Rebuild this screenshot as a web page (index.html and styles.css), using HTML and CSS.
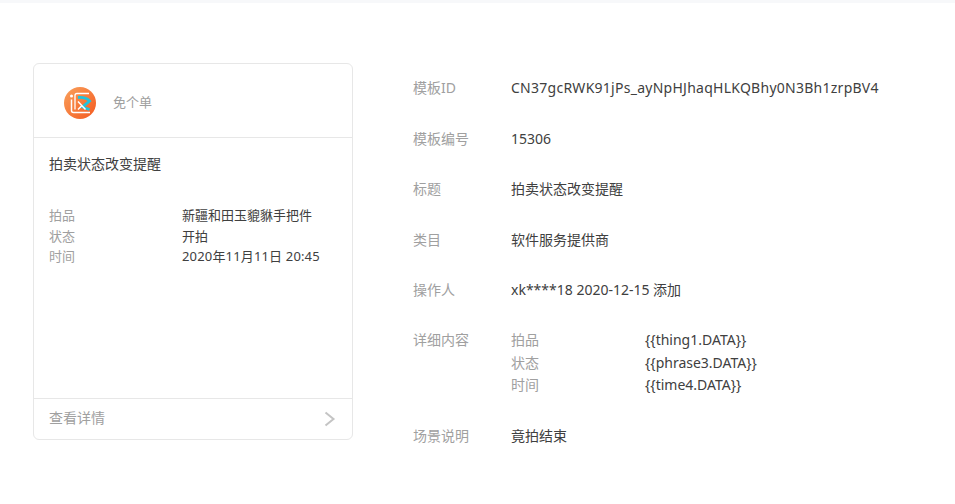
FILE: index.html
```html
<!DOCTYPE html>
<html lang="zh-CN">
<head>
<meta charset="utf-8">
<title>模板详情</title>
<link rel="stylesheet" href="styles.css">
</head>
<body>
<div class="topband"></div>
<main class="page">
  <section class="card">
    <header class="card-head">
      <svg class="logo" viewBox="0 0 32 32" width="32" height="32" aria-hidden="true">
        <defs>
          <linearGradient id="lg" x1="0" y1="0" x2="1" y2="1">
            <stop offset="0" stop-color="#f9a15c"/>
            <stop offset="1" stop-color="#f4591f"/>
          </linearGradient>
        </defs>
        <circle cx="16" cy="16" r="16" fill="url(#lg)"/>
        <circle cx="7.500" cy="9" r="1.500" fill="#fff"/>
        <path d="M7.500 12.500v11q0 2 2 2H26" fill="none" stroke="#fff" stroke-width="1.500"/>
        <path d="M25 6.500H13q-2 0-2 2v14" fill="none" stroke="#fff" stroke-width="1.300"/>
        <path d="M14 10.500q8-.500 11.500 3.500l-7 6 7 2.500" fill="none" stroke="#1fc4de" stroke-width="2.800"/>
        <path d="M14 14.500l7.500 8M14 22.500l4-4" fill="none" stroke="#fff" stroke-width="1.500"/>
      </svg>
      <span class="brand">免个单</span>
    </header>
    <div class="card-body">
      <h2 class="card-title">拍卖状态改变提醒</h2>
      <dl class="kv">
        <dt>拍品</dt><dd>新疆和田玉貔貅手把件</dd>
        <dt>状态</dt><dd>开拍</dd>
        <dt>时间</dt><dd class="time">2020年11月11日 20:45</dd>
      </dl>
    </div>
    <footer class="card-foot">
      <span>查看详情</span>
      <svg class="chev" viewBox="0 0 12 16" width="12" height="16" aria-hidden="true"><path d="M1.500 1.500l8 6.500-8 6.500" fill="none" stroke="#c4c4c4" stroke-width="2"/></svg>
    </footer>
  </section>
  <section class="info">
    <div class="row"><span class="label">模板ID</span><span class="value value-id">CN37gcRWK91jPs_ayNpHJhaqHLKQBhy0N3Bh1zrpBV4</span></div>
    <div class="row"><span class="label">模板编号</span><span class="value">15306</span></div>
    <div class="row"><span class="label">标题</span><span class="value">拍卖状态改变提醒</span></div>
    <div class="row"><span class="label">类目</span><span class="value">软件服务提供商</span></div>
    <div class="row"><span class="label">操作人</span><span class="value">xk****18 2020-12-15 添加</span></div>
    <div class="row row-detail"><span class="label">详细内容</span>
      <dl class="detail">
        <dt>拍品</dt><dd>{{thing1.DATA}}</dd>
        <dt>状态</dt><dd>{{phrase3.DATA}}</dd>
        <dt>时间</dt><dd>{{time4.DATA}}</dd>
      </dl>
    </div>
    <div class="row"><span class="label">场景说明</span><span class="value">竟拍结束</span></div>
  </section>
</main>
</body>
</html>
```
FILE: styles.css
```css
* { box-sizing: border-box; }
html, body { margin: 0; padding: 0; }
body {
  background: #fff;
  color: #404040;
  font-family: "Noto Sans", "Noto Sans CJK SC", sans-serif;
  font-size: 14px;
  line-height: 20px;
  height: 504px;
  overflow: hidden;
}
.topband { height: 3px; background: #f7f8fa; }
.page {
  display: flex;
  align-items: flex-start;
  gap: 60px;
  padding: 60px 0 0 33px;
}
.card {
  width: 320px;
  height: 377px;
  border: 1px solid #e7e7e7;
  border-radius: 6px;
  display: flex;
  flex-direction: column;
}
.card-head {
  height: 74px;
  flex: none;
  display: flex;
  align-items: center;
  padding: 4px 0 0 30px;
  border-bottom: 1px solid #e7e7e7;
}
.logo { flex: none; margin-right: 17px; }
.brand { font-size: 13px; color: #a0a0a0; margin-bottom: 2px; }
.card-body { flex: 1; padding: 16px 15px 0; }
.card-title { margin: 0; font-size: 14px; font-weight: 400; line-height: 20px; color: #404040; }
.kv {
  margin: 31px 0 0;
  display: grid;
  grid-template-columns: 133px 1fr;
  grid-auto-rows: 20.500px;
  font-size: 13px;
}
.kv dt { color: #a0a0a0; }
.kv dd { margin: 0; color: #404040; }
.kv .time { letter-spacing: .16px; }
.card-foot {
  height: 41px;
  flex: none;
  display: flex;
  align-items: center;
  justify-content: space-between;
  padding: 0 16px 3px 15px;
  border-top: 1px solid #e7e7e7;
  font-size: 14px;
  color: #a0a0a0;
}
.chev { display: block; margin-top: 3px; }
.info { width: 520px; padding-top: 15px; }
.row {
  display: flex;
  font-size: 14px;
  line-height: 20px;
  height: 50.500px;
}
.label { flex: none; width: 98px; color: #a0a0a0; font-size: 14px; }
.value { color: #404040; }
.value-id { letter-spacing: .26px; }
.row-detail { height: 95.500px; margin-top: -.5px; }
.detail {
  margin: 0;
  display: grid;
  grid-template-columns: 134px 1fr;
  grid-auto-rows: 22.600px;
  font-size: 14px;
  line-height: 20px;
}
.detail dt { color: #a0a0a0; }
.detail dd { margin: 0; color: #404040; }
```
